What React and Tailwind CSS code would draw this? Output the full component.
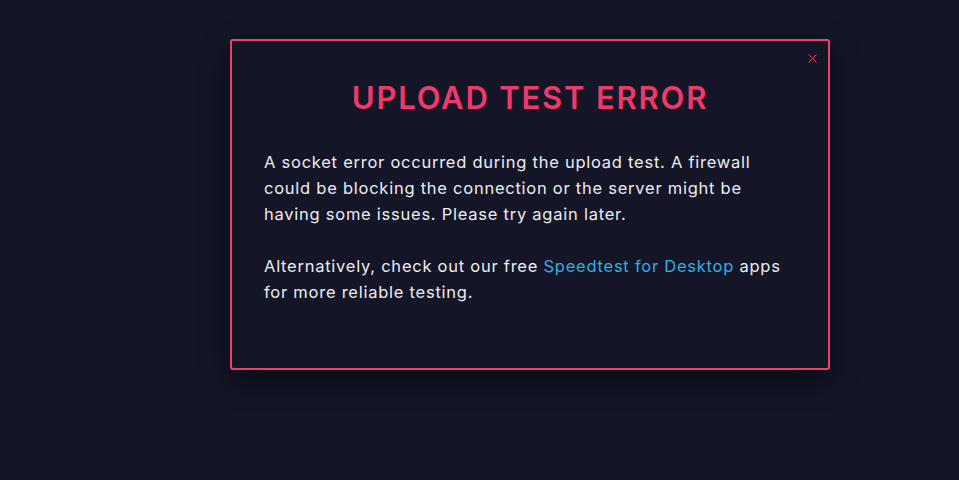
import React from 'react';

export default function App() {
  return (
    <div className="w-[959px] h-[480px] bg-[#141526] pl-[230px] pt-[39px] font-['Inter',sans-serif] overflow-hidden">
      <div className="relative w-[600px] h-[331px] border-2 border-[#e8436c] rounded-[3px] bg-[#141526] shadow-[0_10px_30px_rgba(0,0,0,0.45)]">
        <button className="absolute right-[11px] top-[13px] text-[#e8436c]" aria-label="Close">
          <svg width="9" height="9" viewBox="0 0 9 9" fill="none">
            <path d="M0.5 0.5L8.5 8.5M8.5 0.5L0.5 8.5" stroke="currentColor" strokeWidth="1" />
          </svg>
        </button>
        <h2 className="text-center text-[#f0396a] text-[31px] font-semibold tracking-[1.8px] mt-[38px] leading-[38px]">
          UPLOAD TEST ERROR
        </h2>
        <div className="pl-[32px] mt-[32px] text-[#ecedf2] text-[16.5px] leading-[26px] tracking-[0.75px] w-[560px]">
          <p>
            A socket error occurred during the upload test. A firewall could be blocking the connection or the server might be having some issues. Please try again later.
          </p>
          <p className="mt-[26px]">
            Alternatively, check out our free <a className="text-[#2fb0e3]">Speedtest for Desktop</a> apps for more reliable testing.
          </p>
        </div>
      </div>
    </div>
  );
}
